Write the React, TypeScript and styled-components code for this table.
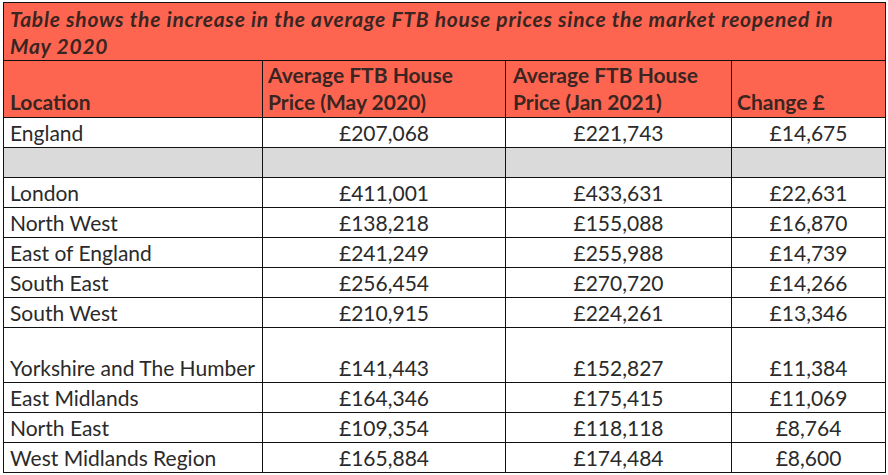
import React from "react";
import styled, { createGlobalStyle } from "styled-components";

const Global = createGlobalStyle`
  html, body { margin: 0; padding: 0; background: #ffffff; }
  body { font-family: Lato, "Open Sans", "Liberation Sans", sans-serif; }
`;

const Table = styled.table`
  margin: 2px 0 0 3px;
  width: 882px;
  border-collapse: collapse;
  table-layout: fixed;
  font-family: Lato, "Liberation Sans", sans-serif;
  font-size: 21px;
  color: #2a2a2a;
`;

const TitleCell = styled.td`
  background: #fe6550;
  border: 1px solid #111;
  height: 57px;
  padding: 2px 6px 0;
  box-sizing: border-box;
  vertical-align: top;
  font-weight: 700;
  font-style: italic;
  line-height: 27px;
  letter-spacing: 0.75px;
  color: #3a2522;
  white-space: nowrap;
`;

const HeadCell = styled.th<{ $pad?: number }>`
  background: #fe6550;
  border: 1px solid #111;
  padding: 0 4px 2px ${(p) => p.$pad ?? 6}px;
  vertical-align: bottom;
  text-align: left;
  font-weight: 700;
  line-height: 27px;
  color: #3a2522;
`;

const Row = styled.tr<{ $h: number }>`
  height: ${(p) => p.$h}px;
`;

const Cell = styled.td<{ $blank?: boolean; $num?: boolean }>`
  border: 1px solid #111;
  padding: 0 6px 1px;
  vertical-align: bottom;
  line-height: 27px;
  text-align: ${(p) => (p.$num ? "center" : "left")};
  background: ${(p) => (p.$blank ? "#dadada" : "#ffffff")};
  white-space: nowrap;
`;

type R = { loc: string; may: string; jan: string; chg: string; h?: number };

const rows: R[] = [
  { loc: "England", may: "£207,068", jan: "£221,743", chg: "£14,675" },
  { loc: "", may: "", jan: "", chg: "" },
  { loc: "London", may: "£411,001", jan: "£433,631", chg: "£22,631" },
  { loc: "North West", may: "£138,218", jan: "£155,088", chg: "£16,870" },
  { loc: "East of England", may: "£241,249", jan: "£255,988", chg: "£14,739" },
  { loc: "South East", may: "£256,454", jan: "£270,720", chg: "£14,266" },
  { loc: "South West", may: "£210,915", jan: "£224,261", chg: "£13,346" },
  { loc: "Yorkshire and The Humber", may: "£141,443", jan: "£152,827", chg: "£11,384", h: 55 },
  { loc: "East Midlands", may: "£164,346", jan: "£175,415", chg: "£11,069" },
  { loc: "North East", may: "£109,354", jan: "£118,118", chg: "£8,764" },
  { loc: "West Midlands Region", may: "£165,884", jan: "£174,484", chg: "£8,600" },
];

export default function App() {
  return (
    <>
      <Global />
      <Table>
        <colgroup>
          <col style={{ width: 259 }} />
          <col style={{ width: 243 }} />
          <col style={{ width: 226 }} />
          <col style={{ width: 154 }} />
        </colgroup>
        <thead>
          <Row $h={58}>
            <TitleCell colSpan={4}>
              Table shows the increase in the average FTB house prices since the market reopened in
              <br />
              May 2020
            </TitleCell>
          </Row>
          <Row $h={57}>
            <HeadCell>Location</HeadCell>
            <HeadCell $pad={5}>Average FTB House Price (May 2020)</HeadCell>
            <HeadCell $pad={7}>Average FTB House Price (Jan 2021)</HeadCell>
            <HeadCell $pad={5}>Change £</HeadCell>
          </Row>
        </thead>
        <tbody>
          {rows.map((r, i) => (
            <Row key={i} $h={r.h ?? 30}>
              <Cell $blank={!r.loc}>{r.loc}</Cell>
              <Cell $blank={!r.loc} $num>{r.may}</Cell>
              <Cell $blank={!r.loc} $num>{r.jan}</Cell>
              <Cell $blank={!r.loc} $num>{r.chg}</Cell>
            </Row>
          ))}
        </tbody>
      </Table>
    </>
  );
}
